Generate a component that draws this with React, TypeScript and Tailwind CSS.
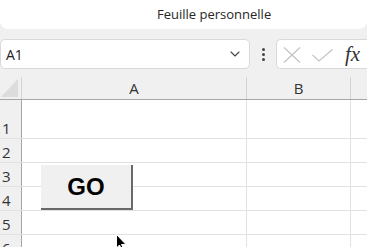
import { ChevronDown } from "lucide-react";

const rows = [
  { n: "1", h: "h-[39px]" },
  { n: "2", h: "h-[24px]" },
  { n: "3", h: "h-[24px]" },
  { n: "4", h: "h-[24px]" },
  { n: "5", h: "h-[24px]" },
  { n: "6", h: "h-[24px]" },
];

export default function App() {
  return (
    <div className="relative w-[367px] h-[247px] overflow-hidden bg-[#f0f0f0] font-['Open_Sans','Noto_Sans',sans-serif]">
      <div className="h-[29px] bg-white rounded-bl-[8px] rounded-br-[8px] flex items-center pl-[157px] text-[13px] text-[#262626]">
        Feuille personnelle
      </div>

      <div className="flex items-center h-[30px] mt-[10px]">
        <div className="w-[250px] h-full bg-white border border-[#d9d9d9] rounded-[5px] flex items-center justify-between pl-[5px] pr-[6px]">
          <span className="text-[14px] text-[#222]">A1</span>
          <ChevronDown className="w-[16px] h-[16px] text-[#444]" strokeWidth={1.6} />
        </div>
        <div className="w-[26px] flex flex-col items-center gap-[2px]">
          <span className="w-[3px] h-[3px] bg-[#444] rounded-full" />
          <span className="w-[3px] h-[3px] bg-[#444] rounded-full" />
          <span className="w-[3px] h-[3px] bg-[#444] rounded-full" />
        </div>
        <div className="flex-1 h-full bg-white border border-r-0 border-[#d9d9d9] rounded-l-[5px] flex items-center pl-[6px]">
          <svg width="18" height="16" viewBox="0 0 18 16" className="mt-[1px]">
            <path d="M1 0.5 L17 15.5 M17 0.5 L1 15.5" stroke="#c4c4c4" strokeWidth="1.2" fill="none" />
          </svg>
          <svg width="21" height="13" viewBox="0 0 21 13" className="ml-[11px] mt-[2px]">
            <path d="M0.5 6 L7 12 L20.5 0.5" stroke="#c4c4c4" strokeWidth="1.2" fill="none" />
          </svg>
          <span className="ml-[12px] text-[21px] italic leading-none text-[#333] font-['Liberation_Serif',serif]">fx</span>
        </div>
      </div>

      <div className="mt-[8px] flex h-[23px] border-b border-[#a6a6a6]">
        <div className="w-[22px] flex items-end justify-end pr-[3px] pb-[2px] border-r border-[#d4d4d4]">
          <svg width="17" height="18" viewBox="0 0 17 18">
            <polygon points="17,0 17,18 0,18" fill="#dcdcdc" />
          </svg>
        </div>
        <div className="w-[225px] flex items-center justify-center text-[15px] text-[#333] border-r border-[#d4d4d4]">A</div>
        <div className="w-[104px] flex items-center justify-center text-[15px] text-[#333] border-r border-[#d4d4d4]">B</div>
        <div className="flex-1" />
      </div>

      <div className="flex flex-col">
        {rows.map((r) => (
          <div key={r.n} className={`flex ${r.h} border-b border-[#e1e1e1]`}>
            <div className="w-[22px] flex items-end pl-[2px] text-[15px] leading-[20px] text-[#333] bg-[#f0f0f0] border-r border-[#a6a6a6] shrink-0">
              {r.n}
            </div>
            <div className="w-[225px] bg-white border-r border-[#e1e1e1] shrink-0" />
            <div className="w-[104px] bg-white border-r border-[#e1e1e1] shrink-0" />
            <div className="flex-1 bg-white" />
          </div>
        ))}
      </div>

      <button className="absolute left-[41px] top-[165px] w-[92px] h-[45px] bg-[#f0f0f0] border-r-2 border-b-2 border-[#696969] flex items-center justify-center font-['Liberation_Sans',Arial,sans-serif] font-bold text-[24px] text-black">
        GO
      </button>

      <svg className="absolute left-[116px] top-[234px]" width="12" height="18" viewBox="0 0 12 18">
        <path d="M0.5 0.5 L0.5 14 L3.5 11 L6 16.5 L8 15.5 L5.5 10.5 L10 10.5 Z" fill="#000" stroke="#fff" strokeWidth="1" />
      </svg>
    </div>
  );
}
